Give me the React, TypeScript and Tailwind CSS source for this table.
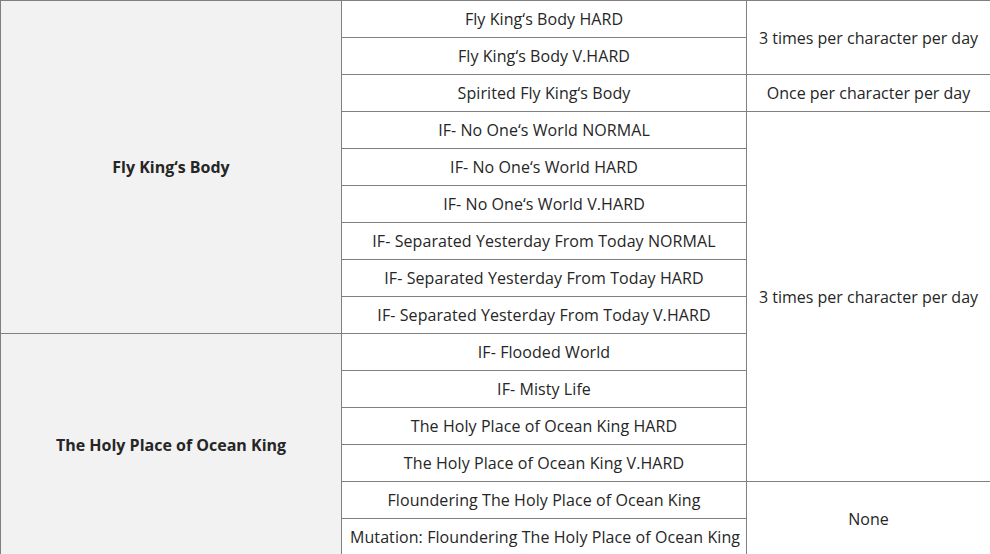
const rows: { name: string; freq?: { text: string; span: number } }[] = [
  { name: "Fly King‘s Body HARD", freq: { text: "3 times per character per day", span: 2 } },
  { name: "Fly King‘s Body V.HARD" },
  { name: "Spirited Fly King‘s Body", freq: { text: "Once per character per day", span: 1 } },
  { name: "IF- No One‘s World NORMAL", freq: { text: "3 times per character per day", span: 10 } },
  { name: "IF- No One‘s World HARD" },
  { name: "IF- No One‘s World V.HARD" },
  { name: "IF- Separated Yesterday From Today NORMAL" },
  { name: "IF- Separated Yesterday From Today HARD" },
  { name: "IF- Separated Yesterday From Today V.HARD" },
  { name: "IF- Flooded World" },
  { name: "IF- Misty Life" },
  { name: "The Holy Place of Ocean King HARD" },
  { name: "The Holy Place of Ocean King V.HARD" },
  { name: "Floundering The Holy Place of Ocean King", freq: { text: "None", span: 2 } },
  { name: "Mutation: Floundering The Holy Place of Ocean King" },
];

// first column groups, keyed by the row they start on
const groups: Record<number, { title: string; span: number }> = {
  0: { title: "Fly King‘s Body", span: 9 },
  9: { title: "The Holy Place of Ocean King", span: 6 },
};

export default function App() {
  return (
    <div className="w-[990px] h-[554px] overflow-hidden bg-white font-['Open_Sans',sans-serif] text-[16px] text-[#262626]">
      <table className="table-fixed border-collapse w-[990px]">
        <colgroup>
          <col className="w-[341px]" />
          <col className="w-[405px]" />
          <col className="w-[244px]" />
        </colgroup>
        <tbody>
          {rows.map((r, i) => (
            <tr key={i}>
              {groups[i] && (
                <td
                  rowSpan={groups[i].span}
                  className="border border-[#808080] bg-[#f2f2f2] text-center font-bold px-2"
                >
                  {groups[i].title}
                </td>
              )}
              <td className="border border-[#808080] text-center px-2 py-1.5 leading-6 whitespace-nowrap tracking-[0.08px]">
                {r.name}
              </td>
              {r.freq && (
                <td rowSpan={r.freq.span} className="border border-[#808080] text-center px-2">
                  {r.freq.text}
                </td>
              )}
            </tr>
          ))}
        </tbody>
      </table>
    </div>
  );
}
